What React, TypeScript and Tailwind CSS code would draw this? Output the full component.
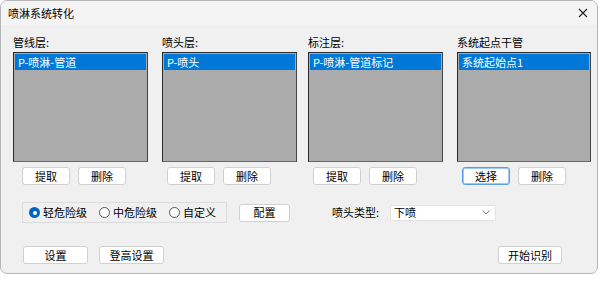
import React from "react";

const font = { fontFamily: '"Noto Sans CJK SC", "Noto Sans", sans-serif' };

type ColProps = {
  label: string;
  item: string;
  left: string;
  width: string;
  btnPad: string;
  first: string;
  focused?: boolean;
};

function Btn({ text, w, focused }: { text: string; w: string; focused?: boolean }) {
  return (
    <button
      className={
        "flex h-[18px] items-center justify-center whitespace-nowrap rounded-[3px] border bg-white text-[11px] leading-none text-black " +
        w +
        (focused ? " border-[#5a9ee6] shadow-[inset_0_0_0_1px_#9cc8f2]" : " border-[#d0d0d0]")
      }
    >
      {text}
    </button>
  );
}

function Column({ label, item, left, width, btnPad, first, focused }: ColProps) {
  return (
    <div className={"flex flex-col " + left + " " + width}>
      <div className="h-[13px] text-[11px] leading-[13px] text-black">{label}</div>
      <div className="mt-[3px] h-[110px] border border-[#2a2a2a] border-b-[#666] border-r-[#444] bg-[#ababab] p-[1px]">
        <div className="flex h-[16px] items-center bg-[#0078d7] pl-[3px] text-[11px] leading-none text-white">
          {item}
        </div>
      </div>
      <div className={"mt-[5px] flex gap-[8px] " + btnPad}>
        <Btn text={first} w="w-[48px]" focused={focused} />
        <Btn text="删除" w="w-[48px]" />
      </div>
    </div>
  );
}

function Radio({ text, checked }: { text: string; checked?: boolean }) {
  return (
    <div className="flex w-[70px] shrink-0 items-center gap-[3px] whitespace-nowrap">
      {checked ? (
        <span className="flex h-[11px] w-[11px] shrink-0 items-center justify-center rounded-full bg-[#0067c0]">
          <span className="h-[4px] w-[4px] rounded-full bg-white" />
        </span>
      ) : (
        <span className="h-[11px] w-[11px] shrink-0 rounded-full border border-[#555] bg-white" />
      )}
      <span className="text-[11px] leading-none text-black">{text}</span>
    </div>
  );
}

export default function App() {
  return (
    <div className="h-[282px] w-[601px] bg-white" style={font}>
      <div className="flex h-[274px] w-[598px] flex-col overflow-hidden rounded-[7px] border border-[#b5b5b5] bg-[#f0f0f0]">
        <div className="flex h-[24px] items-center justify-between bg-[#f4f4f4] pl-[7px] pr-[6px]">
          <span className="text-[11px] leading-none text-black">喷淋系统转化</span>
          <svg width="10" height="10" viewBox="0 0 10 10" className="mr-[3px]">
            <path d="M1 1L9 9M9 1L1 9" stroke="#222" strokeWidth="1.1" />
          </svg>
        </div>
        <div className="flex pt-[11px]">
          <Column label="管线层:" item="P-喷淋-管道" left="ml-[12px]" width="w-[135px]" btnPad="pl-[9px]" first="提取" />
          <Column label="喷头层:" item="P-喷头" left="ml-[14px]" width="w-[135px]" btnPad="pl-[5px]" first="提取" />
          <Column label="标注层:" item="P-喷淋-管道标记" left="ml-[11px]" width="w-[135px]" btnPad="pl-[5px]" first="提取" />
          <Column label="系统起点干管" item="系统起始点1" left="ml-[14px]" width="w-[134px]" btnPad="pl-[5px]" first="选择" focused />
        </div>
        <div className="mt-[17px] flex items-center">
          <div className="ml-[21px] flex h-[21px] w-[205px] items-center border border-[#dcdcdc] pl-[6px]">
            <Radio text="轻危险级" checked />
            <Radio text="中危险级" />
            <Radio text="自定义" />
          </div>
          <div className="ml-[12px]">
            <Btn text="配置" w="w-[51px]" />
          </div>
          <span className="ml-[42px] text-[11px] leading-none text-black">喷头类型:</span>
          <div className="ml-[11px] flex h-[16px] w-[106px] items-center justify-between rounded-[2px] border border-[#e2e2e2] bg-white pl-[3px] pr-[5px]">
            <span className="text-[11px] leading-none text-black">下喷</span>
            <svg width="8" height="5" viewBox="0 0 8 5">
              <path d="M0.5 0.5L4 4L7.5 0.5" stroke="#777" fill="none" strokeWidth="1" />
            </svg>
          </div>
        </div>
        <div className="mt-[23px] flex items-center">
          <div className="ml-[22px]">
            <Btn text="设置" w="w-[65px]" />
          </div>
          <div className="ml-[11px]">
            <Btn text="登高设置" w="w-[65px]" />
          </div>
          <div className="ml-[334px]">
            <Btn text="开始识别" w="w-[64px]" />
          </div>
        </div>
      </div>
    </div>
  );
}
